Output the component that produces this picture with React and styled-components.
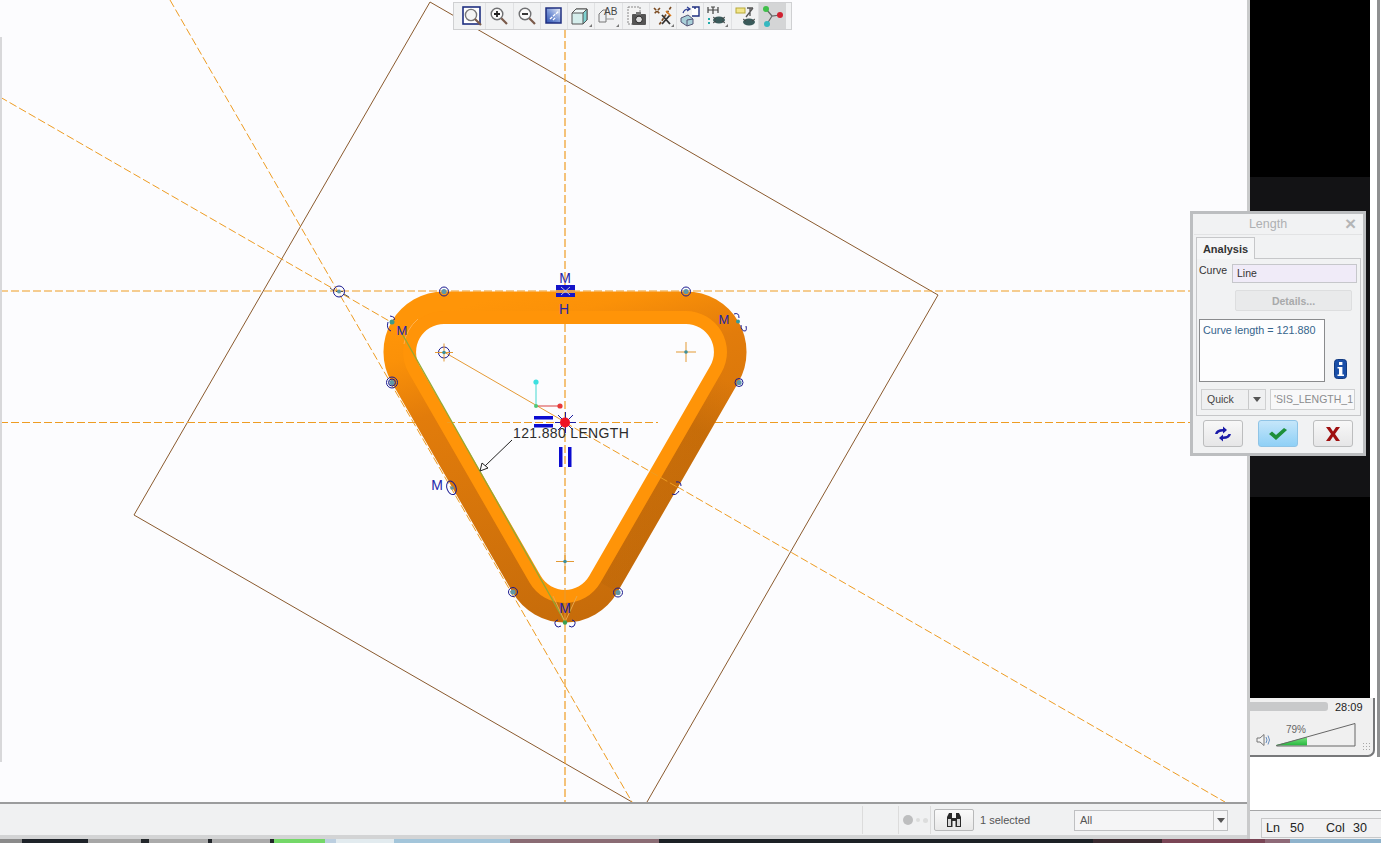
import React from "react";
import styled, { createGlobalStyle } from "styled-components";

const Global = createGlobalStyle`
  html, body { margin: 0; padding: 0; background: #fff; overflow: hidden; }
  * { box-sizing: border-box; }
`;
const FONT = `"Liberation Sans", Arial, sans-serif`;

const Page = styled.div`
  width: 1381px; height: 843px; position: relative; overflow: hidden;
  display: flex; flex-direction: column; font-family: ${FONT};
`;
const MainRow = styled.div`display: flex; height: 839px;`;
const CadWindow = styled.div`
  width: 1250px; display: flex; flex-direction: column; border-right: 3px solid #c9cacb; position: relative;
`;
const Canvas = styled.div`height: 802px; background: #fcfcfe; position: relative; overflow: hidden;`;
const Drawing = styled.svg`display: block;`;
const LeftEdge = styled.div`position: absolute; left: 0; top: 37px; width: 2px; height: 725px; background: #d8d8da;`;

const Toolbar = styled.div`
  position: absolute; left: 453px; top: 2px; width: 339px; height: 28px; padding: 0 5px;
  display: flex; background: #f1f2f3; border: 1px solid #cfd0d2;
`;
const ToolButton = styled.div`
  width: 27.5px; height: 26px; display: flex; align-items: center; justify-content: center;
  border-right: 1px solid ${p => (p.$active ? "#c0c0c0" : "#e0e1e3")};
  background: ${p => (p.$active ? "#d4d5d6" : "transparent")};
  &:last-child { border-right: none; }
`;

const StatusBar = styled.div`
  height: 37px; border-top: 2px solid #9b9c9d; border-bottom: 4px solid #d3d4d5; background: #f0f1f2;
  display: flex; align-items: center; justify-content: flex-end; padding-right: 19px; padding-top: 1px;
`;
const Sep = styled.div`width: 1px; height: 28px; background: #dcdcdc; margin-right: ${p => p.$after || 0}px;`;
const Dots = styled.div`display: flex; align-items: center; gap: 3px; width: 31px; padding-left: 4px;`;
const Dot = styled.span`
  width: ${p => p.$s}px; height: ${p => p.$s}px; border-radius: 50%; background: ${p => p.$c}; display: block;
`;
const BinoButton = styled.div`
  width: 40px; height: 22px; margin-left: 3px; border: 1px solid #b8b9ba; border-radius: 2px;
  background: linear-gradient(#fafafa, #e8e8e8); display: flex; align-items: center; justify-content: center;
`;
const Selected = styled.div`width: 94px; margin-left: 6px; font-size: 11px; color: #555;`;
const Select = styled.div`
  width: 154px; height: 21px; border: 1px solid #bfc0c2; background: #f5f5f6; display: flex;
  font-size: 11px; color: #555; align-items: stretch;
`;
const SelectText = styled.div`flex: 1; padding-left: 5px; line-height: 18px;`;
const SelectArrow = styled.div`
  width: 14px; border-left: 1px solid #c8c8c8; display: flex; align-items: center; justify-content: center;
`;
const ArrowDown = styled.span`
  width: 0; height: 0; border-left: 4px solid transparent; border-right: 4px solid transparent; border-top: 5px solid #555;
`;

const Side = styled.div`width: 131px; display: flex; flex-direction: column; background: #fff;`;
const PlayerRow = styled.div`display: flex; height: 757px;`;
const Player = styled.div`width: 120px; display: flex; flex-direction: column;`;
const Frame = styled.div`height: ${p => p.$h}px; background: ${p => p.$c};`;
const WindowEdge = styled.div`
  width: 11px; background: #fff; display: flex; justify-content: flex-end; padding-right: 1px;
`;
const EdgeLine = styled.div`width: 3px; background: #8f9091;`;
const Controls = styled.div`
  flex: 1; background: #f0f0f0; border-bottom: 2px solid #77787a; border-right: 2px solid #77787a;
  border-bottom-right-radius: 7px; margin-right: -5px; position: relative; z-index: 1; padding-top: 4px;
`;
const SeekRow = styled.div`display: flex; align-items: center; height: 9px;`;
const SeekBar = styled.div`width: 78px; height: 9px; background: #c8c9ca; border-radius: 0 3px 3px 0;`;
const Time = styled.div`margin-left: 7px; font-size: 11px; color: #222;`;
const VolumeRow = styled.div`display: flex; align-items: flex-end; padding: 12px 0 0 6px;`;
const VolumeWrap = styled.div`position: relative; margin-left: 4px;`;
const VolumeText = styled.div`
  position: absolute; left: 11px; top: 1px; font-size: 10px; color: #666;
`;
const Grip = styled.div`
  position: absolute; right: 3px; bottom: 4px; width: 8px; height: 9px;
  background-image: radial-gradient(#a8a8a8 0.8px, transparent 1px); background-size: 3px 3px;
`;
const SideGap = styled.div`height: 54px; border-bottom: 1px solid #a5a6a7;`;
const SideStatus = styled.div`
  flex: 1; background: #f0f1f2; padding: 7px 0 0 11px; display: flex; align-items: flex-start;
`;
const LnCol = styled.div`
  flex: 1; height: 20px; border: 1px solid #c8c9ca; border-right: none; background: #f2f2f3; font-size: 12.5px;
  color: #222; display: flex; align-items: center; padding-left: 4px;
`;
const LnItem = styled.span`width: ${p => p.$w}px;`;

const Taskbar = styled.div`height: 4px; display: flex;`;
const TaskSeg = styled.div`width: ${p => p.$w}px; background: ${p => p.$c};`;

const Dialog = styled.div`
  position: absolute; left: 1190px; top: 211px; width: 176px; height: 245px; z-index: 5;
  border: 3px solid #bcbec0; background: #f1f2f3; display: flex; flex-direction: column; padding: 0 3px;
`;
const TitleBar = styled.div`
  height: 21px; display: flex; align-items: center; justify-content: center; position: relative; margin: 0 -2px;
  padding-right: 20px; border-bottom: 1px solid #e2e3e4; font-size: 12.5px; color: #aeb0b2; flex: none;
`;
const CloseX = styled.span`
  position: absolute; right: 6px; top: 0; font-size: 19px; line-height: 20px; font-weight: bold; color: #b4b5b6;
`;
const TabStrip = styled.div`display: flex; margin-top: 2px; height: 21px; flex: none;`;
const Tab = styled.div`
  width: 59px; border: 1px solid #c6c7c9; border-bottom: none; background: #f5f6f7; font-size: 11px; font-weight: bold;
  color: #333; display: flex; align-items: center; justify-content: center; margin-bottom: -1px; z-index: 1;
`;
const TabPanel = styled.div`
  border: 1px solid #c6c7c9; height: 158px; width: 165px; padding: 5px 2px 0 2px; display: flex; flex-direction: column; flex: none;
`;
const CurveRow = styled.div`display: flex; align-items: flex-start; height: 20px; font-size: 10.5px; color: #333;`;
const CurveLabel = styled.div`width: 33px; padding-top: 0;`;
const CurveField = styled.div`
  width: 125px; height: 19px; background: #f0ebf8; border: 1px solid #c6c7cb; padding-left: 4px; line-height: 17px;
`;
const DetailsBtn = styled.div`
  margin: 6px 0 0 36px; width: 117px; height: 21px; background: #e9eaeb; border: 1px solid #dddedf; border-radius: 2px;
  font-size: 10.5px; font-weight: bold; color: #a8a9aa; display: flex; align-items: center; justify-content: center;
`;
const ResultRow = styled.div`display: flex; align-items: flex-end; margin-top: 8px;`;
const ResultBox = styled.div`
  width: 126px; height: 63px; background: #fdfdfe; border: 1px solid #8a8b8d; padding: 4px 3px;
  font-size: 10.8px; color: #35648c; white-space: nowrap;
`;
const InfoWrap = styled.div`margin-left: 9px; line-height: 0; margin-bottom: 3px;`;
const BottomRow = styled.div`display: flex; margin: 7px 0 0 2px;`;
const QuickSelect = styled.div`
  width: 65px; height: 21px; border: 1px solid #cfd0d1; background: #eff0f1; display: flex; font-size: 10.5px; color: #444;
`;
const QuickText = styled.div`flex: 1; padding-left: 5px; line-height: 18px;`;
const QuickArrow = styled.div`
  width: 17px; border-left: 1px solid #c8c9ca; display: flex; align-items: center; justify-content: center;
`;
const NameField = styled.div`
  width: 85px; height: 21px; margin-left: 4px; border: 1px solid #cfd0d1; background: #f8f8f9; font-size: 10.5px; color: #8b8c8e;
  line-height: 19px; padding-left: 3px; overflow: hidden; white-space: nowrap;
`;
const ButtonRow = styled.div`display: flex; justify-content: space-between; padding: 4px 7px 0 7px;`;
const ActionBtn = styled.div`
  width: 40px; height: 27px; border: 1px solid ${p => (p.$ok ? "#8fc4e6" : "#bcbdbe")}; border-radius: 3px;
  background: ${p => (p.$ok ? "linear-gradient(#c5e6fa, #8fd0f6)" : "linear-gradient(#f8f8f8, #e6e6e7)")};
  display: flex; align-items: center; justify-content: center;
`;

const BlueLabel = styled.text`font: ${p => p.$size || 14}px ${FONT}; fill: #2525a8; text-anchor: middle;`;
const DimLabel = styled.text`font: 14px ${FONT}; fill: #2c2c2c; letter-spacing: 0.35px;`;

/* ---------- geometry helpers ---------- */
const A = [444, 352], B = [686, 352], C = [565, 562];
const K = 0.866;
const rounded = r => {
  const p = (c, x, y) => `${(c[0] + r * x).toFixed(1)} ${(c[1] + r * y).toFixed(1)}`;
  return `M${p(A, 0, -1)} L${p(B, 0, -1)} A${r} ${r} 0 0 1 ${p(B, K, 0.5)} L${p(C, K, 0.5)} A${r} ${r} 0 0 1 ${p(C, -K, 0.5)} L${p(A, -K, 0.5)} A${r} ${r} 0 0 1 ${p(A, 0, -1)}Z`;
};
const ORANGE = "#ee9c22";
const DASH = "8 3";

const Vertex = ({ x, y, r = 4.5 }) => (
  <g>
    <circle cx={x} cy={y} r={r} fill="none" stroke="#1a1a90" strokeWidth="1" />
    <circle cx={x} cy={y} r={2.6} fill="#5f97a8" />
  </g>
);
const Cross = ({ x, y, s = 9 }) => (
  <g stroke="#e39a35" strokeWidth="1">
    <line x1={x - s} y1={y} x2={x + s} y2={y} />
    <line x1={x} y1={y - s} x2={x} y2={y + s} />
    <circle cx={x} cy={y} r="1.8" fill="#3d8f9a" stroke="none" />
  </g>
);

const Scene = () => (
  <Drawing width="1247" height="802" viewBox="0 0 1247 802">
    <defs>
      <linearGradient id="outerBand" gradientUnits="userSpaceOnUse" x1="520" y1="291" x2="610" y2="622">
        <stop offset="0" stopColor="#ff9508" />
        <stop offset="0.1" stopColor="#fb9108" />
        <stop offset="0.28" stopColor="#e27c0b" />
        <stop offset="1" stopColor="#c56b0a" />
      </linearGradient>
      <linearGradient id="rightShade" gradientUnits="userSpaceOnUse" x1="735" y1="385" x2="620" y2="585">
        <stop offset="0" stopColor="#6e3c00" stopOpacity="0" />
        <stop offset="0.25" stopColor="#6e3c00" stopOpacity="0.16" />
        <stop offset="1" stopColor="#6e3c00" stopOpacity="0.06" />
      </linearGradient>
    </defs>
    {/* sketch plane */}
    <path d="M430 2 L938 295 L647 802 M430 2 L134 515 L632 802" fill="none" stroke="#8a5a2e" strokeWidth="1" />
    {/* reference lines */}
    <g stroke={ORANGE} strokeWidth="1.2" strokeDasharray={DASH} fill="none">
      <line x1="0" y1="291" x2="1248" y2="291" />
      <line x1="0" y1="422.5" x2="1191" y2="422.5" strokeWidth="1" />
      <line x1="170" y1="0" x2="632" y2="802" strokeWidth="1" />
      <line x1="0" y1="97" x2="1225" y2="802" strokeWidth="1" />
      <line x1="565" y1="30" x2="565" y2="802" />
    </g>

    {/* swept section */}
    <path d={rounded(60.5)} fill="url(#outerBand)" />
    <path d="M721.5 372.5 L738.4 382.3 L617.4 592.3 L600.5 582.5 Z" fill="url(#rightShade)" />
    <path d={rounded(41)} fill="#ff9408" />
    <path d="M418 319 A41 41 0 0 0 404 344" fill="none" stroke="#ffb250" strokeWidth="1" />
    <path d={rounded(28)} fill="#fcfcfe" />

    {/* reference lines seen through the opening */}
    <g stroke={ORANGE} strokeWidth="1" strokeDasharray={DASH} fill="none">
      <line x1="447" y1="422.5" x2="658" y2="422.5" />
      <line x1="565" y1="324" x2="565" y2="590" strokeWidth="1.2" />
      <line x1="565" y1="422.5" x2="678" y2="487.5" />
    </g>
    <line x1="444" y1="352" x2="565" y2="422" stroke="#e59a35" strokeWidth="1" />
    <line x1="565" y1="590" x2="565" y2="622" stroke="#e59a35" strokeWidth="1" />
    <line x1="400" y1="330" x2="565" y2="622" stroke="#93a833" strokeWidth="1.3" />
    <path d="M565 622 L577 596 M565 622 L553 596" stroke="#eaa84a" strokeWidth="1" />

    {/* top constraint */}
    <BlueLabel x="565" y="283">M</BlueLabel>
    <rect x="556" y="285" width="19" height="12" fill="#1414c8" />
    <rect x="556" y="290" width="19" height="3" fill="#e09a50" />
    <path d="M561 287 L570 295 M570 287 L561 295" stroke="#b9c0e0" strokeWidth="1" />
    <BlueLabel x="564" y="314">H</BlueLabel>

    {/* vertices */}
    <Vertex x={444} y={291.5} />
    <Vertex x={686} y={291.5} />
    <Vertex x={739} y={382.5} r={4} />
    <Vertex x={513} y={592} r={4.5} />
    <Vertex x={618} y={592.5} r={4.5} />
    <Vertex x={392} y={382.5} r={5.5} />
    <circle cx="392" cy="382.5" r="3.5" fill="none" stroke="#1a1a90" strokeWidth="1" />

    <BlueLabel x="402" y="335" $size={13}>M</BlueLabel>
    <circle cx="392" cy="322" r="2.5" fill="#3d9a8a" />
    <path d="M390 316 Q396 317 394 320 M388 322 Q386 329 391 331" fill="none" stroke="#1a1a90" strokeWidth="1" />

    <BlueLabel x="724" y="324" $size={13}>M</BlueLabel>
    <circle cx="738" cy="321.5" r="2" fill="#2f9aa0" />
    <path d="M734 314 Q739 312 739 318 M741 325 Q741 331 745 331 Q747 331 746 326" fill="none" stroke="#1a1a90" strokeWidth="1" />

    {/* projected points */}
    <circle cx="339" cy="291.5" r="5.5" fill="none" stroke="#1a1a90" strokeWidth="1" />
    <path d="M330 288 L334 291 M344 294 L349 297 M336 291.5 L343 291.5" stroke="#333" strokeWidth="0.8" />
    <circle cx="339" cy="291.5" r="2" fill="#5f97a8" />
    <circle cx="444" cy="352.5" r="5.5" fill="none" stroke="#1a1a90" strokeWidth="1" />
    <Cross x={444} y={352.5} />
    <Cross x={686} y={352} s={10} />
    <Cross x={565} y={561.5} s={9} />

    <BlueLabel x="437" y="490">M</BlueLabel>
    <ellipse cx="451.5" cy="488" rx="4.5" ry="7" fill="none" stroke="#1a1a90" strokeWidth="1" transform="rotate(-20 451 488)" />
    <circle cx="452" cy="488" r="1.8" fill="#5f97a8" />
    <path d="M676 482 Q681 481 681 486 M679 491 Q676 496 672 494" fill="none" stroke="#1a1a90" strokeWidth="1" />

    <BlueLabel x="565" y="613">M</BlueLabel>
    <circle cx="565" cy="622.5" r="2.2" fill="#3aa050" />
    <path d="M558 620 Q553 621 556 626 Q558 628 561 626 M572 620 Q577 621 574 626 Q572 628 569 626" fill="none" stroke="#1a1a90" strokeWidth="1" />

    {/* coordinate system */}
    <line x1="536" y1="382" x2="536" y2="406" stroke="#44d8d0" strokeWidth="1" />
    <line x1="536" y1="406" x2="560" y2="406" stroke="#d84040" strokeWidth="1" />
    <circle cx="536" cy="382" r="2.6" fill="#3ce0e0" />
    <circle cx="560" cy="406" r="2.6" fill="#e83838" />
    <circle cx="536" cy="406" r="2" fill="#50c878" />

    {/* equal and parallel constraints */}
    <rect x="534" y="416" width="19" height="3.5" fill="#0b0bd0" />
    <rect x="534" y="424" width="19" height="3.5" fill="#0b0bd0" />
    <rect x="559" y="447" width="3.5" height="20" fill="#0b0bd0" />
    <rect x="568" y="447" width="3.5" height="20" fill="#0b0bd0" />

    <path d="M555 422.5 H576 M565.5 412 V433 M558 415 L573 430 M573 415 L558 430" stroke="#1c1ca0" strokeWidth="1" />
    <circle cx="565" cy="422.5" r="5" fill="#ee1122" />

    {/* dimension */}
    <DimLabel x="513" y="438">121.880 LENGTH</DimLabel>
    <line x1="512" y1="440" x2="485" y2="466" stroke="#222" strokeWidth="1" />
    <path d="M480 471 L482 463 L488 468 Z" fill="#fcfcfe" stroke="#222" strokeWidth="1" />
  </Drawing>
);

/* ---------- toolbar icons ---------- */
const Glass = ({ cx = 10, cy = 10 }) => (
  <g>
    <circle cx={cx} cy={cy} r="5.8" fill="#fafafa" stroke="#6f7072" strokeWidth="1.4" />
    <line x1={cx + 4.3} y1={cy + 4.3} x2={cx + 10} y2={cy + 10} stroke="#7a5a4a" strokeWidth="2.2" />
  </g>
);
const I = ({ children }) => <svg width="24" height="24" viewBox="0 0 24 24">{children}</svg>;
const Corner = () => <path d="M23 20 V23 H20 Z" fill="#777" />;
const ICONS = [
  <I key="1"><rect x="3" y="3" width="17" height="17" fill="#fff" stroke="#1f2f80" strokeWidth="1.6" /><circle cx="11" cy="11" r="5.6" fill="#f4f4f4" stroke="#777" strokeWidth="1.4" /><line x1="15" y1="15" x2="21" y2="21" stroke="#7a5a4a" strokeWidth="2.2" /></I>,
  <I key="2"><Glass /><path d="M7 10 H13 M10 7 V13" stroke="#222" strokeWidth="1.8" /></I>,
  <I key="3"><Glass /><path d="M7 10 H13" stroke="#222" strokeWidth="1.8" /></I>,
  <I key="4"><defs><linearGradient id="rp" x1="0" y1="1" x2="1" y2="0"><stop offset="0" stopColor="#2a4fb0" /><stop offset="0.5" stopColor="#7f9ad8" /><stop offset="1" stopColor="#f4f6fb" /></linearGradient></defs><rect x="4" y="4" width="15" height="15" fill="url(#rp)" stroke="#1f2f80" strokeWidth="1.5" /><path d="M8 15 L17 7 M11 16 L14 13" stroke="#fff" strokeWidth="1.3" strokeDasharray="3 1" /></I>,
  <I key="5"><path d="M3 9 L7 5 H18 V16 L14 20 H3 Z" fill="#d5eeec" stroke="#555" /><path d="M7 5 H18 L14 9 H3Z" fill="#eef8f7" stroke="#555" /><path d="M14 9 V20 L18 16 V5Z" fill="#7fd2d0" stroke="#555" /><Corner /></I>,
  <I key="6"><path d="M3 10 L7 6 H10 V18 H3 Z" fill="#eef0f2" stroke="#777" /><path d="M10 15 H18" fill="none" stroke="#999" /><text x="8" y="11" fontFamily={FONT} fontSize="10" fill="#444">AB</text><Corner /></I>,
  <I key="7"><rect x="4" y="3" width="12" height="17" fill="#f4f4f4" stroke="#888" strokeDasharray="2 1" /><rect x="8" y="10" width="14" height="11" rx="1" fill="#555" /><rect x="12" y="8" width="5" height="3" fill="#777" /><circle cx="15" cy="15.5" r="3.4" fill="#ddd" stroke="#222" /></I>,
  <I key="8"><path d="M3 4 L9 10 M9 4 L3 10 M20 3 L8 21" stroke="#7a4a20" strokeWidth="1.6" strokeDasharray="3 1.5" /><path d="M11 11 L19 20 M19 11 L11 20" stroke="#333" strokeWidth="1.8" /><path d="M15 7 L20 12" stroke="#d87a20" strokeWidth="1.6" /><Corner /></I>,
  <I key="9"><path d="M14 3 H21 V12 H14 M17 3 V5" fill="#fff" stroke="#1f2f80" strokeWidth="1.4" /><path d="M5 9 A6 6 0 0 1 11 5 M9 3 L12 5 L9 7" fill="none" stroke="#2a3a90" strokeWidth="1.2" /><path d="M3 14 L10 11 L15 15 V20 L9 22 L3 18 Z" fill="#a8cfd8" stroke="#557" /><path d="M9 16 L15 15 M9 16 V22" stroke="#557" /></I>,
  <I key="10"><path d="M3 3 V9 M13 3 V9 M3 6 H13 M6 3 H10 M8 3 V10" stroke="#444" strokeWidth="1.2" /><rect x="3" y="14" width="2" height="2" fill="#2aa" /><rect x="3" y="18" width="2" height="2" fill="#2aa" /><ellipse cx="14" cy="16" rx="6" ry="3.5" fill="#3a5a5a" /><path d="M8 13 L11 15 M20 13 L17 15 M8 19 L11 17 M20 19 L17 17" stroke="#444" /><Corner /></I>,
  <I key="11"><rect x="3" y="4" width="9" height="5" fill="#f2e68a" stroke="#b8a838" /><path d="M14 4 H20 M17 4 V12 M13 13 L20 4" stroke="#555" strokeWidth="1.3" /><ellipse cx="16" cy="18" rx="6" ry="3.5" fill="#3a5a5a" /><path d="M10 15 L13 17 M22 15 L19 17" stroke="#444" /></I>,
  <I key="12"><path d="M6 5 L12 12 L20 11 M12 12 L7 20" stroke="#666" strokeWidth="1.2" fill="none" /><circle cx="6" cy="5" r="3" fill="#3fbf4a" /><circle cx="20" cy="11" r="3" fill="#d02030" /><circle cx="7" cy="20" r="3" fill="#35b8c0" /></I>,
];

const TASK = [
  [22, "#8a8a8a"], [66, "#1e2329"], [53, "#a6a6a6"], [8, "#23272b"], [59, "#ababab"], [4, "#23272b"], [58, "#ababab"], [4, "#23272b"],
  [51, "#74d868"], [11, "#bccfe0"], [58, "#e2ebef"], [116, "#a3c5da"], [149, "#8a6c74"], [434, "#1c2126"], [69, "#3a2b30"], [103, "#7a4656"], [25, "#8e6a78"], [91, "#8fb3cc"],
];

export default function App() {
  return (
    <Page>
      <Global />
      <MainRow>
        <CadWindow>
          <Canvas>
            <Scene />
            <LeftEdge />
            <Toolbar>
              {ICONS.map((icon, i) => (
                <ToolButton key={i} $active={i === 11}>{icon}</ToolButton>
              ))}
            </Toolbar>
          </Canvas>
          <StatusBar>
            <Sep $after={35} />
            <Sep />
            <Dots>
              <Dot $s={10} $c="#bdbebf" />
              <Dot $s={4} $c="#dcdddd" />
              <Dot $s={5} $c="#dcdddd" />
            </Dots>
            <Sep />
            <BinoButton>
              <svg width="20" height="17" viewBox="0 0 20 17">
                <path d="M3 5 L5 1 H8 V6 H12 V1 H15 L17 5 V15 H11.5 V9 H8.5 V15 H3 Z" fill="#2a2a2a" />
                <path d="M4 7 V14 H7 V7 Z M13 7 V14 H16 V7 Z" fill="#d8d8d8" />
              </svg>
            </BinoButton>
            <Selected>1 selected</Selected>
            <Select>
              <SelectText>All</SelectText>
              <SelectArrow><ArrowDown /></SelectArrow>
            </Select>
          </StatusBar>
        </CadWindow>
        <Side>
          <PlayerRow>
            <Player>
              <Frame $h={177} $c="#000" />
              <Frame $h={320} $c="#131315" />
              <Frame $h={201} $c="#000" />
              <Controls>
                <SeekRow>
                  <SeekBar />
                  <Time>28:09</Time>
                </SeekRow>
                <VolumeRow>
                  <svg width="15" height="14" viewBox="0 0 15 14">
                    <path d="M1 5 H4 L8 1.5 V12.5 L4 9 H1 Z" fill="#f4f4f4" stroke="#777" />
                    <path d="M10 4 Q12 7 10 10 M12 2.5 Q15 7 12 11.5" fill="none" stroke="#6a8fc0" />
                  </svg>
                  <VolumeWrap>
                    <svg width="82" height="24" viewBox="0 0 82 24" style={{ display: "block" }}>
                      <defs>
                        <linearGradient id="vol" x1="0" y1="0" x2="0" y2="1">
                          <stop offset="0" stopColor="#7be27f" />
                          <stop offset="1" stopColor="#26b83e" />
                        </linearGradient>
                      </defs>
                      <path d="M1 22 L32 14 V22.5 H1 Z" fill="url(#vol)" />
                      <path d="M1.5 22.5 L80 0.5 V23 H1.5 Z" fill="none" stroke="#666" strokeWidth="1" />
                    </svg>
                    <VolumeText>79%</VolumeText>
                  </VolumeWrap>
                </VolumeRow>
                <Grip />
              </Controls>
            </Player>
            <WindowEdge><EdgeLine /></WindowEdge>
          </PlayerRow>
          <SideGap />
          <SideStatus>
            <LnCol>
              <LnItem $w={24}>Ln</LnItem>
              <LnItem $w={36}>50</LnItem>
              <LnItem $w={27}>Col</LnItem>
              <LnItem $w={20}>30</LnItem>
            </LnCol>
          </SideStatus>
        </Side>
      </MainRow>
      <Taskbar>
        {TASK.map(([w, c], i) => <TaskSeg key={i} $w={w} $c={c} />)}
      </Taskbar>

      <Dialog>
        <TitleBar>Length<CloseX>×</CloseX></TitleBar>
        <TabStrip><Tab>Analysis</Tab></TabStrip>
        <TabPanel>
          <CurveRow>
            <CurveLabel>Curve</CurveLabel>
            <CurveField>Line</CurveField>
          </CurveRow>
          <DetailsBtn>Details...</DetailsBtn>
          <ResultRow>
            <ResultBox>Curve length = 121.880</ResultBox>
            <InfoWrap>
              <svg width="13" height="20" viewBox="0 0 13 20">
                <rect x="0.5" y="0.5" width="12" height="19" rx="3" fill="#1a4fa8" stroke="#123a80" />
                <rect x="5" y="3" width="3.4" height="3" fill="#fff" />
                <path d="M3.5 8 H8.4 V15.5 H10 V17 H3.5 V15.5 H5 V9.5 H3.5 Z" fill="#fff" />
              </svg>
            </InfoWrap>
          </ResultRow>
          <BottomRow>
            <QuickSelect>
              <QuickText>Quick</QuickText>
              <QuickArrow><ArrowDown /></QuickArrow>
            </QuickSelect>
            <NameField>'SIS_LENGTH_1</NameField>
          </BottomRow>
        </TabPanel>
        <ButtonRow>
          <ActionBtn>
            <svg width="20" height="16" viewBox="0 0 20 16">
              <path d="M2 8 Q3 3 10 3 V0.5 L14 4 L10 7.5 V5.5 Q5.5 5.5 4.5 8 Z" fill="#1a1aa8" />
              <path d="M18 8 Q17 13 10 13 V15.5 L6 12 L10 8.5 V10.5 Q14.5 10.5 15.5 8 Z" fill="#1a1aa8" />
            </svg>
          </ActionBtn>
          <ActionBtn $ok>
            <svg width="20" height="16" viewBox="0 0 20 16">
              <path d="M1 8 L4 5.5 L8 9 L16 2 L19 4 L8 14 Z" fill="#1d8f3a" />
            </svg>
          </ActionBtn>
          <ActionBtn>
            <svg width="18" height="16" viewBox="0 0 18 16">
              <path d="M2 1 H6 L9 5.5 L12 1 H16 L11 8 L16 15 H12 L9 10.5 L6 15 H2 L7 8 Z" fill="#a01010" />
            </svg>
          </ActionBtn>
        </ButtonRow>
      </Dialog>
    </Page>
  );
}
